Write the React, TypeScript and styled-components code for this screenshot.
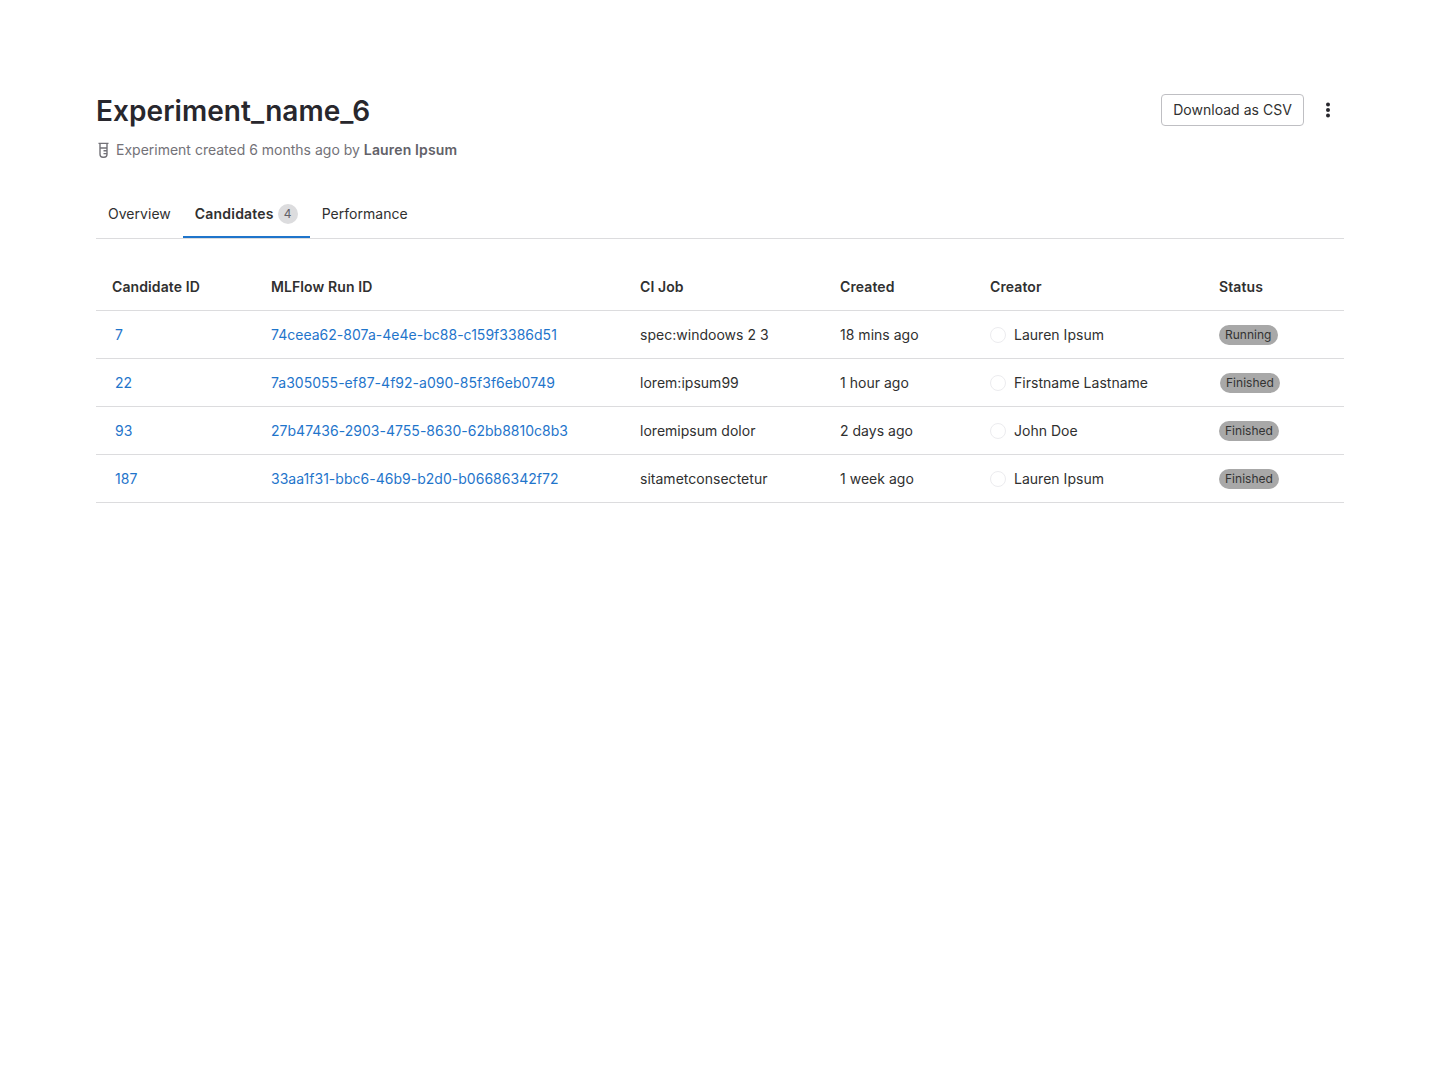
import React from "react";
import styled, { createGlobalStyle } from "styled-components";

const GlobalStyle = createGlobalStyle`
  body {
    margin: 0;
    background: #ffffff;
    color: #303030;
    font-family: Inter, "Noto Sans", sans-serif;
    font-size: 14px;
    letter-spacing: 0.02px;
  }
`;

const Page = styled.main`
  padding: 94px 96px 0;
`;

const Header = styled.header`
  display: flex;
  justify-content: space-between;
  align-items: flex-start;
`;

const Title = styled.h1`
  margin: 0;
  font-size: 28px;
  line-height: 34px;
  font-weight: 600;
  letter-spacing: 0.06px;
  color: #28272d;
`;

const Meta = styled.p`
  display: flex;
  align-items: center;
  gap: 4px;
  margin: 12px 0 0;
  line-height: 20px;
  letter-spacing: 0;
  color: #737278;

  b {
    font-weight: 600;
    letter-spacing: 0.15px;
    color: #626168;
  }
`;

const Actions = styled.div`
  display: flex;
  align-items: center;
  gap: 8px;
`;

const Button = styled.button`
  height: 32px;
  padding: 0 11px 2px 11px;
  width: 143px;
  border: 1px solid #bfbfc3;
  border-radius: 4px;
  background: #ffffff;
  color: #303030;
  font: inherit;
  letter-spacing: inherit;
`;

const KebabButton = styled.button`
  display: flex;
  align-items: center;
  justify-content: center;
  width: 32px;
  height: 32px;
  padding: 0;
  border: 0;
  background: none;
  color: #28272d;
`;

const Tabs = styled.nav`
  display: flex;
  margin-top: 32px;
  border-bottom: 1px solid #dcdcde;
`;

const Tab = styled.a<{ $active?: boolean }>`
  display: flex;
  align-items: center;
  gap: 4px;
  height: 46px;
  padding: 0 12px 1px;
  box-sizing: border-box;
  color: #303030;
  font-weight: ${(p) => (p.$active ? 600 : 400)};
  letter-spacing: ${(p) => (p.$active ? "0.2px" : "0.03px")};
  border-bottom: 2px solid ${(p) => (p.$active ? "#1f75cb" : "transparent")};
`;

const Count = styled.span`
  display: flex;
  align-items: center;
  justify-content: center;
  width: 20px;
  height: 20px;
  border-radius: 50%;
  background: #dcdcde;
  color: #626168;
  font-size: 12px;
  font-weight: 400;
`;

const Table = styled.div`
  display: grid;
  grid-template-columns: 175px 369px 200px 150px 229px 125px;
  margin-top: 24px;
`;

const Row = styled.div`
  display: grid;
  grid-column: 1 / -1;
  grid-template-columns: subgrid;
  align-items: center;
  box-sizing: border-box;
  height: 48px;
  border-bottom: 1px solid #dcdcde;
`;

const HeadCell = styled.div<{ $first?: boolean }>`
  padding-left: ${(p) => (p.$first ? "16px" : "0")};
  font-weight: 600;
  letter-spacing: 0.1px;
  color: #303030;
`;

const Cell = styled.div`
  display: flex;
  align-items: center;
  color: #303030;
`;

const IdCell = styled(Cell)`
  padding-left: 19px;
`;

const RunLink = styled.a`
  color: #1f75cb;
`;

const Avatar = styled.span`
  box-sizing: border-box;
  width: 16px;
  height: 16px;
  margin-right: 8px;
  border: 1px solid #ececef;
  border-radius: 50%;
`;

const Badge = styled.span<{ $nudge?: boolean }>`
  margin-left: ${(p) => (p.$nudge ? "1px" : "0")};
  padding: 0 6px;
  height: 20px;
  line-height: 20px;
  border-radius: 10px;
  background: #a8a8a8;
  color: #333333;
  font-size: 12px;
`;

const FlaskIcon = () => (
  <svg width="16" height="16" viewBox="0 0 16 16" fill="none" stroke="#737278" strokeWidth="1.4">
    <path d="M2.5 1.4h10M4 1.6v10.6a3 3 0 0 0 3 3h1a3 3 0 0 0 3-3V1.6M4 6h7M7.5 8.8H11M7.5 11.6H11" />
  </svg>
);

const KebabIcon = () => (
  <svg width="16" height="16" viewBox="0 0 16 16" fill="currentColor">
    <circle cx="8" cy="2.5" r="2" />
    <circle cx="8" cy="8" r="2" />
    <circle cx="8" cy="13.5" r="2" />
  </svg>
);

const candidates = [
  { id: "7", run: "74ceea62-807a-4e4e-bc88-c159f3386d51", job: "spec:windoows 2 3", created: "18 mins ago", creator: "Lauren Ipsum", status: "Running" },
  { id: "22", run: "7a305055-ef87-4f92-a090-85f3f6eb0749", job: "lorem:ipsum99", created: "1 hour ago", creator: "Firstname Lastname", status: "Finished", nudge: true },
  { id: "93", run: "27b47436-2903-4755-8630-62bb8810c8b3", job: "loremipsum dolor", created: "2 days ago", creator: "John Doe", status: "Finished" },
  { id: "187", run: "33aa1f31-bbc6-46b9-b2d0-b06686342f72", job: "sitametconsectetur", created: "1 week ago", creator: "Lauren Ipsum", status: "Finished" },
];

const columns = ["Candidate ID", "MLFlow Run ID", "CI Job", "Created", "Creator", "Status"];

const App = () => (
  <Page>
    <GlobalStyle />
    <Header>
      <div>
        <Title>Experiment_name_6</Title>
        <Meta>
          <FlaskIcon />
          <span>
            Experiment created 6 months ago by <b>Lauren Ipsum</b>
          </span>
        </Meta>
      </div>
      <Actions>
        <Button>Download as CSV</Button>
        <KebabButton>
          <KebabIcon />
        </KebabButton>
      </Actions>
    </Header>
    <Tabs>
      <Tab>Overview</Tab>
      <Tab $active>
        Candidates <Count>4</Count>
      </Tab>
      <Tab>Performance</Tab>
    </Tabs>
    <Table>
      <Row>
        {columns.map((c, i) => (
          <HeadCell key={c} $first={i === 0}>
            {c}
          </HeadCell>
        ))}
      </Row>
      {candidates.map((c) => (
        <Row key={c.id}>
          <IdCell>
            <RunLink>{c.id}</RunLink>
          </IdCell>
          <Cell>
            <RunLink>{c.run}</RunLink>
          </Cell>
          <Cell>{c.job}</Cell>
          <Cell>{c.created}</Cell>
          <Cell>
            <Avatar />
            {c.creator}
          </Cell>
          <Cell>
            <Badge $nudge={c.nudge}>{c.status}</Badge>
          </Cell>
        </Row>
      ))}
    </Table>
  </Page>
);

export default App;
